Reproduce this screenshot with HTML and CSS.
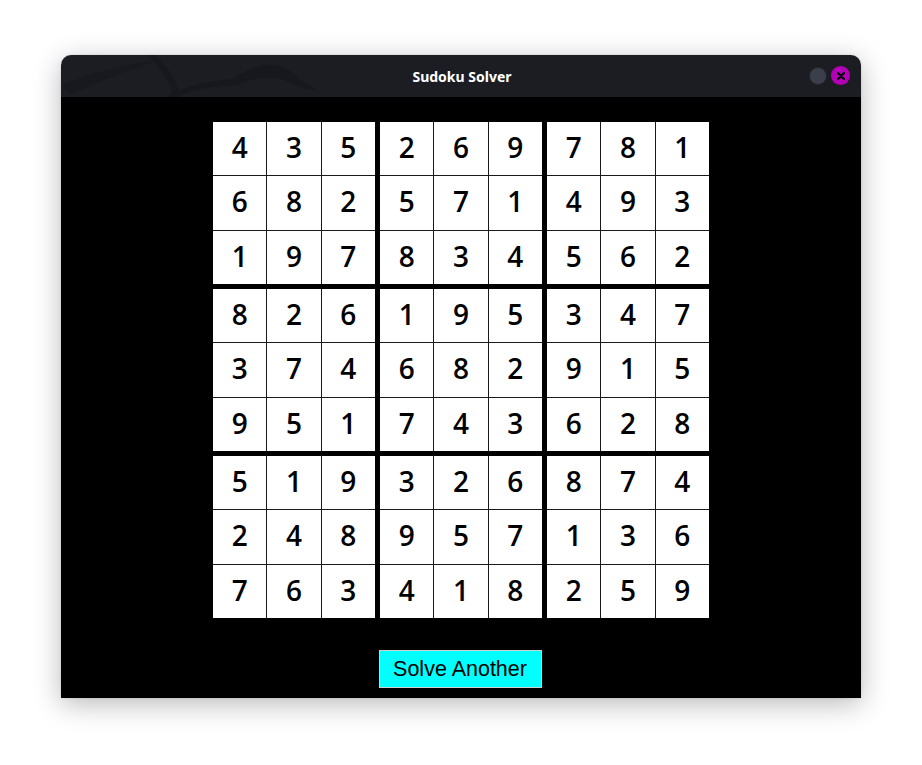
FILE: index.html
```html
<!DOCTYPE html>
<html>
<head>
<meta charset="utf-8">
<link rel="stylesheet" href="styles.css">
</head>
<body>
<div class="window">
  <div class="titlebar">
    <svg class="dragon" width="560" height="42" viewBox="0 0 560 42">
      <path d="M0 30 C30 18 60 10 100 4 C80 12 40 24 10 40 Z" fill="#18191f"/>
      <path d="M90 -4 C105 10 115 22 120 42 L113 42 C108 24 98 10 84 -2 Z" fill="#17181e"/>
      <path d="M105 42 C125 30 150 26 172 24 C188 12 208 6 222 12 C234 18 238 24 244 28 L258 36 L242 33 C230 28 224 25 214 23 C200 21 186 26 176 30 C152 31 130 35 115 42 Z" fill="#17181e"/>
    </svg>
    <span class="title">Sudoku Solver</span>
    <div class="controls">
      <span class="btn-min"></span>
      <span class="btn-close">
        <svg width="10" height="10" viewBox="0 0 10 10"><path d="M2 2 L8 8 M8 2 L2 8" stroke="#000" stroke-width="2.2" stroke-linecap="round"/></svg>
      </span>
    </div>
  </div>
  <div class="content">
    <div class="board">
      <div class="block"><span>4</span><span>3</span><span>5</span><span>6</span><span>8</span><span>2</span><span>1</span><span>9</span><span>7</span></div>
      <div class="block"><span>2</span><span>6</span><span>9</span><span>5</span><span>7</span><span>1</span><span>8</span><span>3</span><span>4</span></div>
      <div class="block"><span>7</span><span>8</span><span>1</span><span>4</span><span>9</span><span>3</span><span>5</span><span>6</span><span>2</span></div>
      <div class="block"><span>8</span><span>2</span><span>6</span><span>3</span><span>7</span><span>4</span><span>9</span><span>5</span><span>1</span></div>
      <div class="block"><span>1</span><span>9</span><span>5</span><span>6</span><span>8</span><span>2</span><span>7</span><span>4</span><span>3</span></div>
      <div class="block"><span>3</span><span>4</span><span>7</span><span>9</span><span>1</span><span>5</span><span>6</span><span>2</span><span>8</span></div>
      <div class="block"><span>5</span><span>1</span><span>9</span><span>2</span><span>4</span><span>8</span><span>7</span><span>6</span><span>3</span></div>
      <div class="block"><span>3</span><span>2</span><span>6</span><span>9</span><span>5</span><span>7</span><span>4</span><span>1</span><span>8</span></div>
      <div class="block"><span>8</span><span>7</span><span>4</span><span>1</span><span>3</span><span>6</span><span>2</span><span>5</span><span>9</span></div>
    </div>
    <button class="solve">Solve Another</button>
  </div>
</div>
</body>
</html>
```
FILE: styles.css
```css
html, body {
  margin: 0;
  padding: 0;
  background: #ffffff;
}
body {
  width: 922px;
  height: 765px;
  overflow: hidden;
}
.window {
  margin: 55px 0 0 61px;
  width: 800px;
  border-radius: 10px 10px 0 0;
  box-shadow: 0 6px 28px rgba(0, 0, 0, 0.28), 0 0 2px rgba(0,0,0,0.15);
}
.titlebar {
  position: relative;
  height: 42px;
  background: #1b1d23;
  border-radius: 10px 10px 0 0;
  display: flex;
  align-items: center;
  justify-content: center;
  overflow: hidden;
}
.dragon {
  position: absolute;
  left: 0;
  top: 0;
}
.title {
  position: relative;
  left: 1px;
  color: #ffffff;
  font-family: "Noto Sans", "DejaVu Sans", sans-serif;
  font-weight: bold;
  font-size: 14px;
}
.controls {
  position: absolute;
  right: 11px;
  top: 11px;
  display: flex;
  gap: 4px;
  align-items: center;
}
.btn-min {
  width: 18px;
  height: 18px;
  border-radius: 50%;
  background: #3b3e4b;
  box-sizing: border-box;
  border: 1px solid #24262d;
}
.btn-close {
  width: 19px;
  height: 19px;
  border-radius: 50%;
  background: #b300b8;
  display: flex;
  align-items: center;
  justify-content: center;
}
.content {
  background: #000000;
  height: 601px;
  display: flex;
  flex-direction: column;
  align-items: center;
  padding-top: 25px;
  box-sizing: border-box;
}
.board {
  display: grid;
  grid-template-columns: repeat(3, 162px);
  grid-template-rows: repeat(3, 162px);
  gap: 5px;
}
.block {
  display: grid;
  grid-template-columns: repeat(3, 1fr);
  grid-template-rows: repeat(3, 1fr);
  gap: 1px;
  background: #1a1a1a;
}
.block span {
  background: #ffffff;
  color: #000000;
  display: flex;
  align-items: center;
  justify-content: center;
  font-family: "Open Sans", "DejaVu Sans", sans-serif;
  font-weight: 600;
  font-size: 28px;
  padding-bottom: 3px;
}
.solve {
  margin-top: 32px;
  margin-right: 2px;
  width: 163px;
  height: 38px;
  background: #00ffff;
  border: 1px solid #d0d0d0;
  color: #000000;
  font-family: "Liberation Sans", Arial, sans-serif;
  font-size: 21.5px;
  padding: 0;
}
```
